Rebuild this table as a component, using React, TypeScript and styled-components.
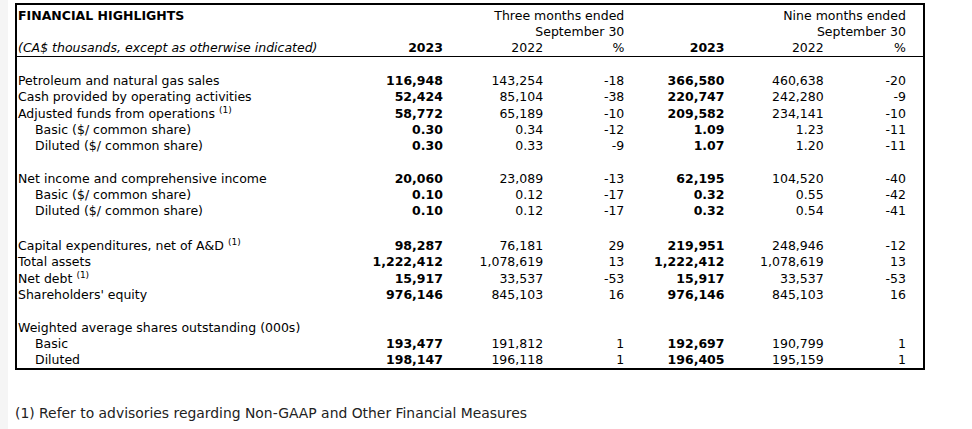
import styled, { createGlobalStyle } from 'styled-components';

const GlobalStyle = createGlobalStyle`
  html, body {
    margin: 0;
    padding: 0;
    background: #ffffff;
  }
`;

const Page = styled.div`
  min-height: 100vh;
  box-sizing: border-box;
  border-left: 8px solid #f5f5f5;
  padding: 3px 0 0 7px;
  font-family: 'DejaVu Sans', Verdana, sans-serif;
  color: #000;
`;

const Table = styled.table`
  width: 910px;
  border-collapse: collapse;
  table-layout: fixed;
  border: 2px solid #000;
  font-size: 12.5px;
`;

type CellProps = {
  $bold?: boolean;
  $align?: 'left' | 'right';
  $indent?: boolean;
  $italic?: boolean;
};

const Cell = styled.td<CellProps>`
  padding: 0;
  padding-left: ${({ $indent }) => ($indent ? '18px' : '1px')};
  line-height: 16px;
  white-space: nowrap;
  text-align: ${({ $align }) => $align || 'right'};
  font-weight: ${({ $bold }) => ($bold ? 700 : 400)};
  font-style: ${({ $italic }) => ($italic ? 'italic' : 'normal')};
  vertical-align: bottom;
`;

type RowProps = { $h?: number; $rule?: boolean };

const Row = styled.tr<RowProps>`
  & > td {
    height: ${({ $h }) => $h || 16}px;
    border-bottom: ${({ $rule }) => ($rule ? '1px solid #000' : 'none')};
  }
`;

const Note = styled.sup`
  font-size: 9px;
  line-height: 0;
  vertical-align: 5px;
`;

const Footnote = styled.p`
  margin: 35px 0 0;
  font-family: 'DejaVu Sans', Verdana, sans-serif;
  font-size: 13.9px;
  line-height: 16px;
  color: #222;
`;

type DataRow = {
  label: string;
  note?: boolean;
  indent?: boolean;
  values: string[];
};

type Group = { gap: number; rows: DataRow[] };

const groups: Group[] = [
  {
    gap: 16,
    rows: [
      { label: 'Petroleum and natural gas sales', values: ['116,948', '143,254', '-18', '366,580', '460,638', '-20'] },
      { label: 'Cash provided by operating activities', values: ['52,424', '85,104', '-38', '220,747', '242,280', '-9'] },
      { label: 'Adjusted funds from operations', note: true, values: ['58,772', '65,189', '-10', '209,582', '234,141', '-10'] },
      { label: 'Basic ($/ common share)', indent: true, values: ['0.30', '0.34', '-12', '1.09', '1.23', '-11'] },
      { label: 'Diluted ($/ common share)', indent: true, values: ['0.30', '0.33', '-9', '1.07', '1.20', '-11'] },
    ],
  },
  {
    gap: 17,
    rows: [
      { label: 'Net income and comprehensive income', values: ['20,060', '23,089', '-13', '62,195', '104,520', '-40'] },
      { label: 'Basic ($/ common share)', indent: true, values: ['0.10', '0.12', '-17', '0.32', '0.55', '-42'] },
      { label: 'Diluted ($/ common share)', indent: true, values: ['0.10', '0.12', '-17', '0.32', '0.54', '-41'] },
    ],
  },
  {
    gap: 18,
    rows: [
      { label: 'Capital expenditures, net of A&D', note: true, values: ['98,287', '76,181', '29', '219,951', '248,946', '-12'] },
      { label: 'Total assets', values: ['1,222,412', '1,078,619', '13', '1,222,412', '1,078,619', '13'] },
      { label: 'Net debt', note: true, values: ['15,917', '33,537', '-53', '15,917', '33,537', '-53'] },
      { label: "Shareholders' equity", values: ['976,146', '845,103', '16', '976,146', '845,103', '16'] },
    ],
  },
  {
    gap: 17,
    rows: [
      { label: 'Weighted average shares outstanding (000s)', values: ['', '', '', '', '', ''] },
      { label: 'Basic', indent: true, values: ['193,477', '191,812', '1', '192,697', '190,799', '1'] },
      { label: 'Diluted', indent: true, values: ['198,147', '196,118', '1', '196,405', '195,159', '1'] },
    ],
  },
];

// column widths: label, then the six figures, then the right gutter
const widths = [346, 80, 100, 81, 100, 99, 82, 18];

const GroupRows = ({ gap, rows }: Group) => (
  <>
    <Row $h={gap}>
      <Cell colSpan={8} />
    </Row>
    {rows.map((r, i) => (
      <Row key={i} $h={r.note ? 17 : 16}>
        <Cell $align="left" $indent={r.indent}>
          {r.label}
          {r.note && (
            <>
              {' '}
              <Note>(1)</Note>
            </>
          )}
        </Cell>
        {r.values.map((v, j) => (
          <Cell key={j} $bold={j === 0 || j === 3}>
            {v}
          </Cell>
        ))}
        <Cell />
      </Row>
    ))}
  </>
);

const App = () => {
  return (
    <Page>
      <GlobalStyle />
      <Table>
        <colgroup>
          {widths.map((w, i) => (
            <col key={i} style={{ width: w }} />
          ))}
        </colgroup>
        <tbody>
          <Row $h={19}>
            <Cell $align="left" $bold>FINANCIAL HIGHLIGHTS</Cell>
            <Cell colSpan={3}>Three months ended</Cell>
            <Cell colSpan={3}>Nine months ended</Cell>
            <Cell />
          </Row>
          <Row>
            <Cell />
            <Cell colSpan={3}>September 30</Cell>
            <Cell colSpan={3}>September 30</Cell>
            <Cell />
          </Row>
          <Row $rule>
            <Cell $align="left" $italic>(CA$ thousands, except as otherwise indicated)</Cell>
            <Cell $bold>2023</Cell>
            <Cell>2022</Cell>
            <Cell>%</Cell>
            <Cell $bold>2023</Cell>
            <Cell>2022</Cell>
            <Cell>%</Cell>
            <Cell />
          </Row>
          {groups.map((g, gi) => (
            <GroupRows key={gi} gap={g.gap} rows={g.rows} />
          ))}
        </tbody>
      </Table>
      <Footnote>(1) Refer to advisories regarding Non-GAAP and Other Financial Measures</Footnote>
    </Page>
  );
};

export default App;
